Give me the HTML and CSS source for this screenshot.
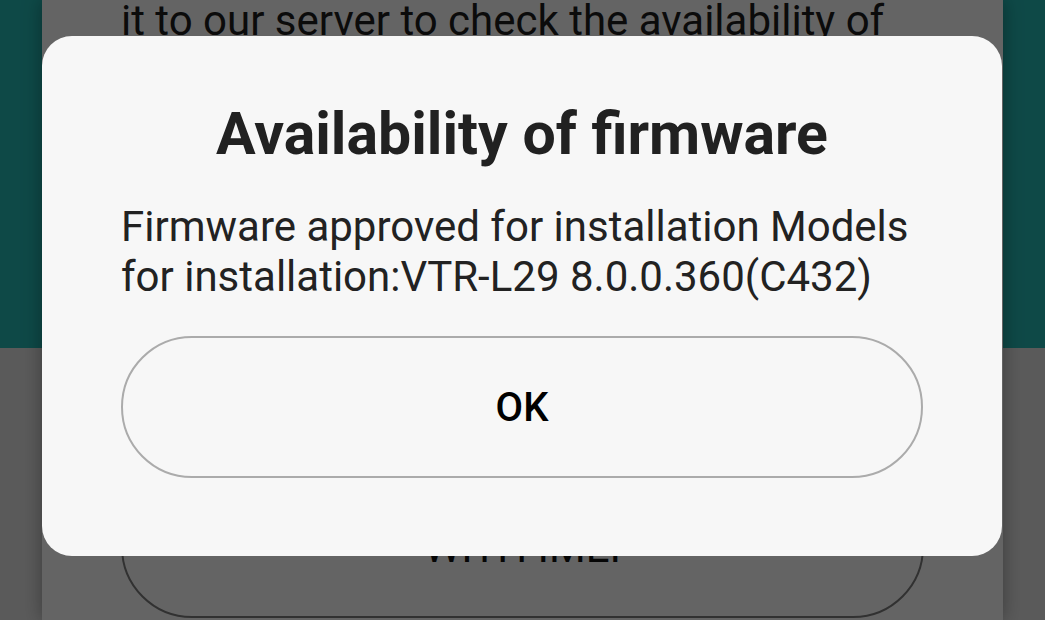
FILE: index.html
```html
<!DOCTYPE html>
<html lang="en">
<head>
  <meta charset="UTF-8">
  <meta name="viewport" content="width=device-width, initial-scale=1.0">
  <title>Firmware check</title>
  <link rel="stylesheet" href="styles.css">
</head>
<body>

  <!-- page behind the dialog -->
  <div class="page">
    <div class="card">
      <p class="card-text">it to our server to check the availability of</p>
      <div class="card-spacer"></div>
      <button class="outline-btn">WITH IMEI</button>
    </div>
  </div>

  <!-- dim layer + dialog -->
  <div class="scrim">
    <div class="dialog">
      <h1 class="dialog-title">Availability of firmware</h1>
      <p class="dialog-text">Firmware approved for installation Models for installation:VTR-L29 8.0.0.360(C432)</p>
      <button class="dialog-btn">OK</button>
    </div>
  </div>

</body>
</html>
```

FILE: styles.css
```css
/* ========== base ========== */
html, body {
  margin: 0;
  padding: 0;
  height: 100%;
  overflow: hidden;
}
body {
  font-family: Roboto, "Noto Sans", "Liberation Sans", sans-serif;
  background: #e0e0e0;
}

/* ========== page behind ========== */
.page {
  height: 100%;
  background: linear-gradient(#24b6b2 0, #24b6b2 348px, #e2e2e2 348px);
  padding: 0 42px;
  box-sizing: border-box;
}
.card {
  height: 100%;
  background: #fafafa;
  box-shadow: 0 0 18px rgba(0,0,0,0.35);
  padding: 0 79px;
  display: flex;
  flex-direction: column;
}
.card-text {
  margin: -4px 0 0;
  font-size: 42px;
  line-height: 50px;
  color: #1c1c1c;
  white-space: nowrap;
}
.card-spacer {
  height: 430px;
}
.outline-btn {
  height: 142px;
  flex-shrink: 0;
  border: 2px solid #7a7a7a;
  border-radius: 71px;
  background: none;
  font-family: inherit;
  font-size: 42px;
  color: #111;
}

/* ========== dialog ========== */
.scrim {
  position: fixed;
  top: 0; left: 0; right: 0; bottom: 0;
  background: rgba(0,0,0,0.6);
}
.dialog {
  position: absolute;
  top: 36px;
  left: 42px;
  width: 960px;
  height: 520px;
  box-sizing: border-box;
  padding: 63px 79px 78px;
  background: #f7f7f7;
  border-radius: 30px;
  display: flex;
  flex-direction: column;
}
.dialog-title {
  margin: 0;
  font-size: 59px;
  line-height: 70px;
  font-weight: 700;
  color: #212121;
  text-align: center;
}
.dialog-text {
  margin: 33px 0 34px;
  font-size: 42px;
  line-height: 50px;
  color: #222;
}
.dialog-btn {
  height: 142px;
  flex-shrink: 0;
  border: 2px solid #ababab;
  border-radius: 71px;
  background: none;
  font-family: inherit;
  font-size: 40px;
  font-weight: 500;
  color: #000;
}
```
